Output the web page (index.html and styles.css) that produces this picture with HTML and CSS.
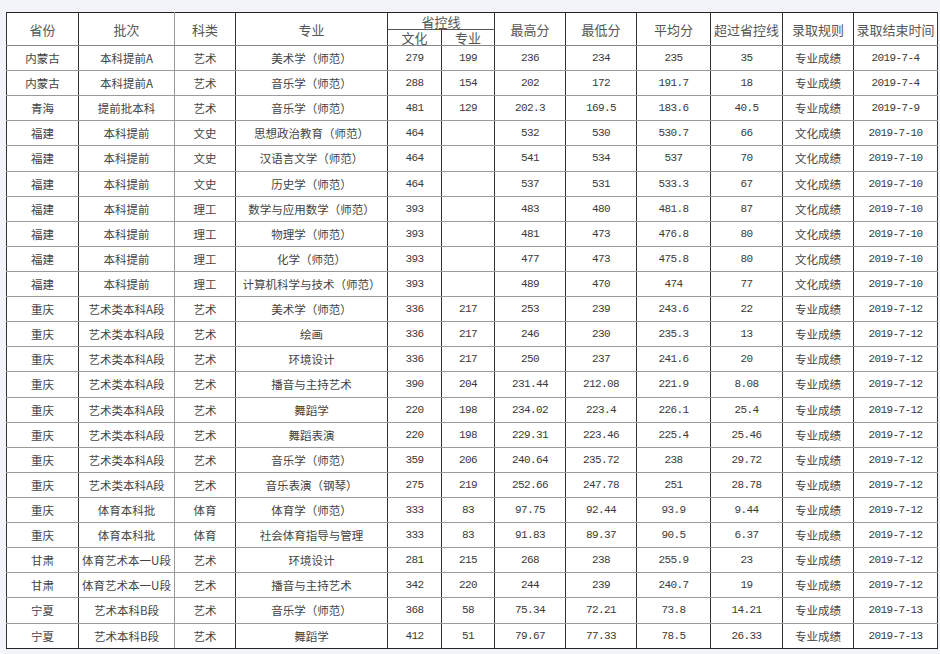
FILE: index.html
```html
<!DOCTYPE html>
<html lang="zh">
<head>
<meta charset="utf-8">
<link rel="stylesheet" href="styles.css">
</head>
<body>
<div class="page">
<table class="score">
<colgroup>
<col class="c1"><col class="c2"><col class="c3"><col class="c4"><col class="c5"><col class="c6"><col class="c7"><col class="c8"><col class="c9"><col class="c10"><col class="c11"><col class="c12">
</colgroup>
<thead>
<tr class="h1">
<th rowspan="2">省份</th><th rowspan="2" class="g">批次</th><th rowspan="2">科类</th><th rowspan="2">专业</th><th colspan="2" class="sub">省控线</th><th rowspan="2">最高分</th><th rowspan="2">最低分</th><th rowspan="2">平均分</th><th rowspan="2">超过省控线</th><th rowspan="2">录取规则</th><th rowspan="2">录取结束时间</th>
</tr>
<tr class="h2"><th>文化</th><th>专业</th></tr>
</thead>
<tbody>
<tr><td>内蒙古</td><td class="g">本科提前A</td><td>艺术</td><td>美术学（师范）</td><td class="n">279</td><td class="n">199</td><td class="n">236</td><td class="n">234</td><td class="n">235</td><td class="n">35</td><td>专业成绩</td><td class="n">2019-7-4</td></tr>
<tr><td>内蒙古</td><td class="g">本科提前A</td><td>艺术</td><td>音乐学（师范）</td><td class="n">288</td><td class="n">154</td><td class="n">202</td><td class="n">172</td><td class="n">191.7</td><td class="n">18</td><td>专业成绩</td><td class="n">2019-7-4</td></tr>
<tr><td>青海</td><td class="g">提前批本科</td><td>艺术</td><td>音乐学（师范）</td><td class="n">481</td><td class="n">129</td><td class="n">202.3</td><td class="n">169.5</td><td class="n">183.6</td><td class="n">40.5</td><td>专业成绩</td><td class="n">2019-7-9</td></tr>
<tr><td>福建</td><td class="g">本科提前</td><td>文史</td><td>思想政治教育（师范）</td><td class="n">464</td><td></td><td class="n">532</td><td class="n">530</td><td class="n">530.7</td><td class="n">66</td><td>文化成绩</td><td class="n">2019-7-10</td></tr>
<tr><td>福建</td><td class="g">本科提前</td><td>文史</td><td>汉语言文学（师范）</td><td class="n">464</td><td></td><td class="n">541</td><td class="n">534</td><td class="n">537</td><td class="n">70</td><td>文化成绩</td><td class="n">2019-7-10</td></tr>
<tr><td>福建</td><td class="g">本科提前</td><td>文史</td><td>历史学（师范）</td><td class="n">464</td><td></td><td class="n">537</td><td class="n">531</td><td class="n">533.3</td><td class="n">67</td><td>文化成绩</td><td class="n">2019-7-10</td></tr>
<tr><td>福建</td><td class="g">本科提前</td><td>理工</td><td>数学与应用数学（师范）</td><td class="n">393</td><td></td><td class="n">483</td><td class="n">480</td><td class="n">481.8</td><td class="n">87</td><td>文化成绩</td><td class="n">2019-7-10</td></tr>
<tr><td>福建</td><td class="g">本科提前</td><td>理工</td><td>物理学（师范）</td><td class="n">393</td><td></td><td class="n">481</td><td class="n">473</td><td class="n">476.8</td><td class="n">80</td><td>文化成绩</td><td class="n">2019-7-10</td></tr>
<tr><td>福建</td><td class="g">本科提前</td><td>理工</td><td>化学（师范）</td><td class="n">393</td><td></td><td class="n">477</td><td class="n">473</td><td class="n">475.8</td><td class="n">80</td><td>文化成绩</td><td class="n">2019-7-10</td></tr>
<tr><td>福建</td><td class="g">本科提前</td><td>理工</td><td>计算机科学与技术（师范）</td><td class="n">393</td><td></td><td class="n">489</td><td class="n">470</td><td class="n">474</td><td class="n">77</td><td>文化成绩</td><td class="n">2019-7-10</td></tr>
<tr><td>重庆</td><td class="g">艺术类本科A段</td><td>艺术</td><td>美术学（师范）</td><td class="n">336</td><td class="n">217</td><td class="n">253</td><td class="n">239</td><td class="n">243.6</td><td class="n">22</td><td>专业成绩</td><td class="n">2019-7-12</td></tr>
<tr><td>重庆</td><td class="g">艺术类本科A段</td><td>艺术</td><td>绘画</td><td class="n">336</td><td class="n">217</td><td class="n">246</td><td class="n">230</td><td class="n">235.3</td><td class="n">13</td><td>专业成绩</td><td class="n">2019-7-12</td></tr>
<tr><td>重庆</td><td class="g">艺术类本科A段</td><td>艺术</td><td>环境设计</td><td class="n">336</td><td class="n">217</td><td class="n">250</td><td class="n">237</td><td class="n">241.6</td><td class="n">20</td><td>专业成绩</td><td class="n">2019-7-12</td></tr>
<tr><td>重庆</td><td class="g">艺术类本科A段</td><td>艺术</td><td>播音与主持艺术</td><td class="n">390</td><td class="n">204</td><td class="n">231.44</td><td class="n">212.08</td><td class="n">221.9</td><td class="n">8.08</td><td>专业成绩</td><td class="n">2019-7-12</td></tr>
<tr><td>重庆</td><td class="g">艺术类本科A段</td><td>艺术</td><td>舞蹈学</td><td class="n">220</td><td class="n">198</td><td class="n">234.02</td><td class="n">223.4</td><td class="n">226.1</td><td class="n">25.4</td><td>专业成绩</td><td class="n">2019-7-12</td></tr>
<tr><td>重庆</td><td class="g">艺术类本科A段</td><td>艺术</td><td>舞蹈表演</td><td class="n">220</td><td class="n">198</td><td class="n">229.31</td><td class="n">223.46</td><td class="n">225.4</td><td class="n">25.46</td><td>专业成绩</td><td class="n">2019-7-12</td></tr>
<tr><td>重庆</td><td class="g">艺术类本科A段</td><td>艺术</td><td>音乐学（师范）</td><td class="n">359</td><td class="n">206</td><td class="n">240.64</td><td class="n">235.72</td><td class="n">238</td><td class="n">29.72</td><td>专业成绩</td><td class="n">2019-7-12</td></tr>
<tr><td>重庆</td><td class="g">艺术类本科A段</td><td>艺术</td><td>音乐表演（钢琴）</td><td class="n">275</td><td class="n">219</td><td class="n">252.66</td><td class="n">247.78</td><td class="n">251</td><td class="n">28.78</td><td>专业成绩</td><td class="n">2019-7-12</td></tr>
<tr><td>重庆</td><td class="g">体育本科批</td><td>体育</td><td>体育学（师范）</td><td class="n">333</td><td class="n">83</td><td class="n">97.75</td><td class="n">92.44</td><td class="n">93.9</td><td class="n">9.44</td><td>专业成绩</td><td class="n">2019-7-12</td></tr>
<tr><td>重庆</td><td class="g">体育本科批</td><td>体育</td><td>社会体育指导与管理</td><td class="n">333</td><td class="n">83</td><td class="n">91.83</td><td class="n">89.37</td><td class="n">90.5</td><td class="n">6.37</td><td>专业成绩</td><td class="n">2019-7-12</td></tr>
<tr><td>甘肃</td><td class="g">体育艺术本一U段</td><td>艺术</td><td>环境设计</td><td class="n">281</td><td class="n">215</td><td class="n">268</td><td class="n">238</td><td class="n">255.9</td><td class="n">23</td><td>专业成绩</td><td class="n">2019-7-12</td></tr>
<tr><td>甘肃</td><td class="g">体育艺术本一U段</td><td>艺术</td><td>播音与主持艺术</td><td class="n">342</td><td class="n">220</td><td class="n">244</td><td class="n">239</td><td class="n">240.7</td><td class="n">19</td><td>专业成绩</td><td class="n">2019-7-12</td></tr>
<tr><td>宁夏</td><td class="g">艺术本科B段</td><td>艺术</td><td>音乐学（师范）</td><td class="n">368</td><td class="n">58</td><td class="n">75.34</td><td class="n">72.21</td><td class="n">73.8</td><td class="n">14.21</td><td>专业成绩</td><td class="n">2019-7-13</td></tr>
<tr><td>宁夏</td><td class="g">艺术本科B段</td><td>艺术</td><td>舞蹈学</td><td class="n">412</td><td class="n">51</td><td class="n">79.67</td><td class="n">77.33</td><td class="n">78.5</td><td class="n">26.33</td><td>专业成绩</td><td class="n">2019-7-13</td></tr>
</tbody>
</table>
</div>
</body>
</html>
```

FILE: styles.css
```css
html, body {
  margin: 0;
  padding: 0;
  background: #f3f4f9;
}
.page {
  padding: 12px 0 0 6px;
}
.score {
  border-collapse: collapse;
  table-layout: fixed;
  width: 931px;
  background: #fff;
  font-family: "Noto Sans CJK SC", "Noto Sans", sans-serif;
  color: #444;
  border: 1px solid #222;
}
.c1 { width: 72px; }
.c2 { width: 96px; }
.c3 { width: 61px; }
.c4 { width: 152px; }
.c5 { width: 54px; }
.c6 { width: 53px; }
.c7 { width: 71px; }
.c8 { width: 71px; }
.c9 { width: 74px; }
.c10 { width: 72px; }
.c11 { width: 71px; }
.c12 { width: 84px; }
.score th, .score td {
  padding: 0;
  text-align: center;
  white-space: nowrap;
  overflow: hidden;
  border-left: 1px solid #333;
  border-right: 1px solid #333;
  border-top: 1px solid #9a9a9a;
  border-bottom: 1px solid #9a9a9a;
}
.score th {
  font-weight: normal;
  font-size: 13px;
  color: #555;
  line-height: 15px;
}
.score thead tr.h1 th { height: 16px; border-top: 1px solid #222; }
.score thead tr.h2 th { height: 15px; }
.score thead th.sub { border-bottom: 1px solid #555; }
.score thead th { border-bottom: 1px solid #888; }
.score td {
  height: 24.12px;
  font-size: 11.5px;
  line-height: 14px;
}
.score td.n {
  font-family: "Liberation Mono", "DejaVu Sans Mono", monospace;
  font-size: 11px;
  letter-spacing: -0.6px;
  color: #3a3a3a;
}
.score .g {
  border-right-color: #999;
}
.score tbody tr:last-child td { border-bottom: 1px solid #222; }
```
